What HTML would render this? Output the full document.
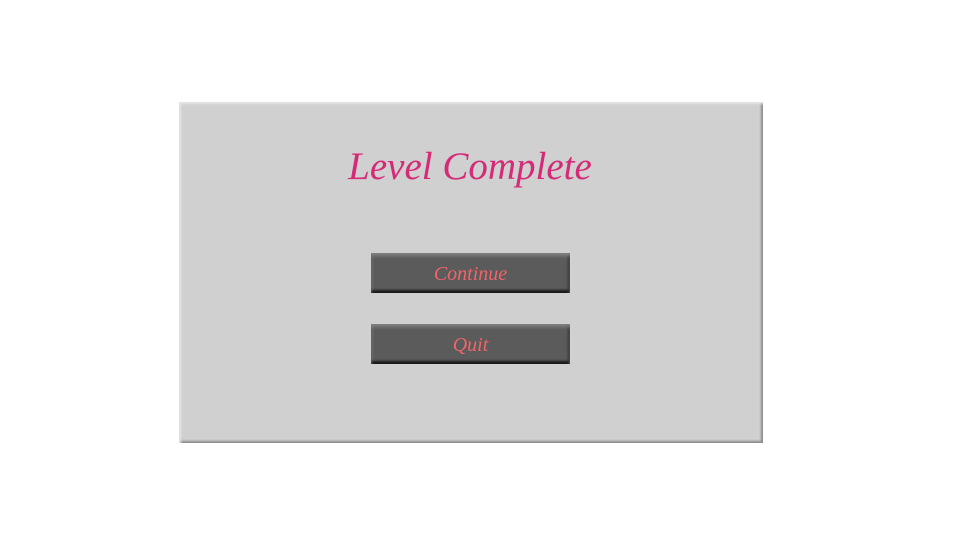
<!DOCTYPE html>
<html><head><style>
html,body{margin:0;padding:0;width:960px;height:540px;background:#fff;overflow:hidden}
.panel{position:absolute;left:179px;top:102px;width:584px;height:341px;background:#d0d0d0;
box-shadow:inset 2px 2px 2px #e4e4e4, inset -2px -2px 2px #8a8a8a;}
.title{position:absolute;left:0;width:940px;top:144px;text-align:center;font-family:"Liberation Serif",serif;font-style:italic;font-size:39px;color:#d42a78}
.btn{position:absolute;left:371px;width:199px;height:40px;background:#5b5b5b;
box-shadow:inset 0 3px 3px #808080, inset 0 -3px 2px #1a1a1a, inset 2px 0 2px #6e6e6e, inset -2px 0 2px #2a2a2a;
color:#f0646a;font-family:"Liberation Serif",serif;font-style:italic;font-size:20px;text-align:center;line-height:42px}
</style></head><body>
<div class="panel"></div>
<div class="title">Level Complete</div>
<div class="btn" style="top:253px">Continue</div>
<div class="btn" style="top:324px">Quit</div>
</body></html>
